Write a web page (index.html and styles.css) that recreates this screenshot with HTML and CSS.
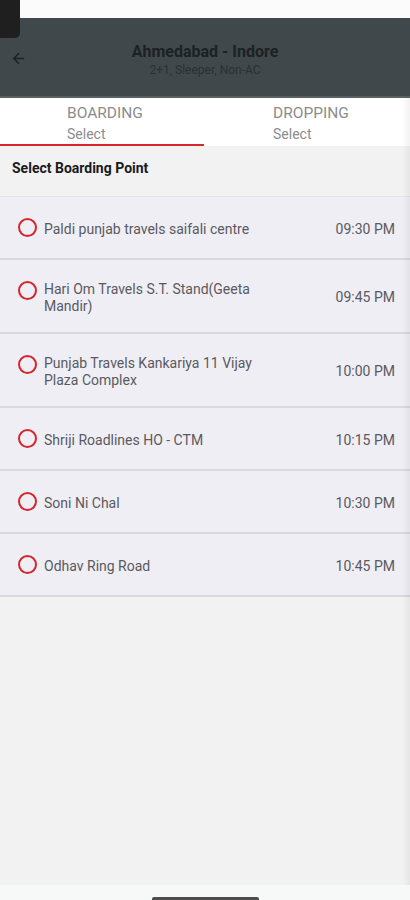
FILE: index.html
```html
<!DOCTYPE html>
<html lang="en">
<head>
    <meta charset="UTF-8">
    <meta name="viewport" content="width=device-width, initial-scale=1.0">
    <title>Select Boarding Point</title>
    <link rel="stylesheet" href="styles.css">
</head>
<body>
    <div class="screen">
        <div class="status-bar"></div>
        <div class="cutout"></div>

        <header class="topbar">
            <button class="back-btn" aria-label="Back">
                <svg width="16" height="16" viewBox="0 0 24 24">
                    <path d="M20 11H7.83l5.59-5.59L12 4l-8 8 8 8 1.41-1.41L7.83 13H20v-2z" fill="#1c2123"/>
                </svg>
            </button>
            <div class="route">
                <h1>Ahmedabad - Indore</h1>
                <p>2+1, Sleeper, Non-AC</p>
            </div>
        </header>

        <div class="tabs">
            <div class="tab active">
                <span class="tab-title">BOARDING</span>
                <span class="tab-sub">Select</span>
            </div>
            <div class="tab">
                <span class="tab-title">DROPPING</span>
                <span class="tab-sub">Select</span>
            </div>
        </div>

        <main class="content">
            <h2 class="section-title">Select Boarding Point</h2>
            <ul class="points">
                <li class="point">
                    <span class="radio"></span>
                    <span class="name">Paldi punjab travels saifali centre</span>
                    <span class="time">09:30 PM</span>
                </li>
                <li class="point">
                    <span class="radio"></span>
                    <span class="name">Hari Om Travels S.T. Stand(Geeta Mandir)</span>
                    <span class="time">09:45 PM</span>
                </li>
                <li class="point">
                    <span class="radio"></span>
                    <span class="name">Punjab Travels Kankariya 11 Vijay Plaza Complex</span>
                    <span class="time">10:00 PM</span>
                </li>
                <li class="point">
                    <span class="radio"></span>
                    <span class="name">Shriji Roadlines HO - CTM</span>
                    <span class="time">10:15 PM</span>
                </li>
                <li class="point">
                    <span class="radio"></span>
                    <span class="name">Soni Ni Chal</span>
                    <span class="time">10:30 PM</span>
                </li>
                <li class="point">
                    <span class="radio"></span>
                    <span class="name">Odhav Ring Road</span>
                    <span class="time">10:45 PM</span>
                </li>
            </ul>
        </main>

        <div class="nav-bar">
            <span class="handle"></span>
        </div>
    </div>
</body>
</html>
```

FILE: styles.css
```css
body {
    margin: 0;
    padding: 0;
    font-family: Roboto, 'Noto Sans', sans-serif;
    background: #f2f2f2;
}

.screen {
    position: relative;
    width: 410px;
    height: 900px;
    display: flex;
    flex-direction: column;
    overflow: hidden;
    background: #f2f2f2;
}

.screen::after {
    content: '';
    position: absolute;
    top: 98px;
    right: 0;
    bottom: 15px;
    width: 8px;
    background: linear-gradient(to right, rgba(0, 0, 0, 0), rgba(0, 0, 0, 0.05));
}

.status-bar {
    height: 18px;
    background: #fbfbfb;
}

.cutout {
    position: absolute;
    top: 0;
    left: 0;
    width: 20px;
    height: 38px;
    background: #1f1f1f;
    border-bottom-right-radius: 5px;
}

.topbar {
    height: 78px;
    background: #40484c;
    border-bottom: 2px solid #596064;
    display: flex;
    align-items: center;
}

.back-btn {
    background: none;
    border: none;
    padding: 0;
    margin: 2px 0 0 10px;
    width: 17px;
    height: 17px;
    display: flex;
}

.back-btn svg {
    width: 17px;
    height: 17px;
}

.route {
    flex: 1;
    text-align: center;
    margin-right: 27px;
    margin-top: 5px;
}

.route h1 {
    margin: 0;
    font-size: 16px;
    font-weight: bold;
    color: #1c2123;
    line-height: 20px;
}

.route p {
    margin: 1px 0 0;
    font-size: 12px;
    color: #2a3033;
    line-height: 15px;
}

.tabs {
    display: flex;
    background: #fff;
    height: 48px;
}

.tab {
    flex: 1;
    display: flex;
    flex-direction: column;
    padding-left: 67px;
    padding-top: 6px;
    box-sizing: border-box;
    border-bottom: 2px solid transparent;
}

.tab + .tab {
    padding-left: 69px;
}

.tab.active {
    border-bottom: 2px solid #d8262c;
}

.tab-title {
    font-size: 15.5px;
    color: #8c8c8c;
    line-height: 18px;
}

.tab-sub {
    font-size: 14px;
    color: #8c8c8c;
    line-height: 17px;
    margin-top: 4px;
}

.content {
    flex: 1;
}

.section-title {
    margin: 0;
    padding: 14px 12px 0;
    font-size: 14px;
    font-weight: bold;
    color: #1b1b1b;
    line-height: 17px;
    height: 36px;
}

.points {
    list-style: none;
    margin: 0;
    padding: 0;
    border-top: 1px solid #e6e6ea;
}

.point {
    display: flex;
    align-items: center;
    min-height: 63px;
    box-sizing: border-box;
    padding: 21px 15px 17px 18px;
    background: #efeef5;
    border-bottom: 2px solid #d9d9dc;
}

.radio {
    align-self: flex-start;
    flex-shrink: 0;
    width: 15px;
    height: 15px;
    border: 2px solid #d3262d;
    border-radius: 50%;
    margin-right: 7px;
}

.name {
    flex: 1;
    max-width: 215px;
    font-size: 14px;
    line-height: 17px;
    color: #5a5a5e;
    margin-right: auto;
}

.time {
    font-size: 14px;
    color: #5a5a5e;
    white-space: nowrap;
    margin-top: -2px;
}

.nav-bar {
    height: 15px;
    background: #f7f8f8;
    display: flex;
    justify-content: center;
    align-items: flex-end;
}

.handle {
    width: 107px;
    height: 3px;
    background: #4d4d4d;
    border-radius: 2px 2px 0 0;
}
```
